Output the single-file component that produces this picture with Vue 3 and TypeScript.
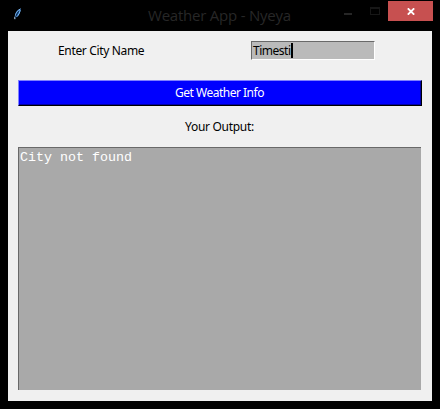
<script setup lang="ts">
import { ref } from 'vue'

const title = 'Weather App - Nyeya'
const city = ref('Timesti')
const output = ref('City not found')
</script>

<template>
  <div class="window">
    <header class="titlebar">
      <svg class="feather" width="8" height="12" viewBox="0 0 8 12">
        <path d="M1 11C.4 6 2.2 2 6.8.5 6.6 4.5 5.2 8 2 9.5Z" fill="#1d5fa8" />
        <path d="M1.2 9C1.2 5.5 3.2 2.5 6.5.8M2.7 8.8C4.6 7.2 5.8 4.5 6.2 2" fill="none" stroke="#8fc4f5" stroke-width=".9" />
        <path d="M.9 11.2C1.4 8.2 3 5.5 4.8 3.2" fill="none" stroke="#06152b" stroke-width=".8" />
        <path d="M.6 9.2L.9 11.2" stroke="#d5e8f8" stroke-width=".9" />
      </svg>
      <h1 class="title">{{ title }}</h1>
      <div class="controls">
        <span class="minimize"></span>
        <span class="maximize"></span>
        <button class="close" aria-label="Close">
          <svg width="8" height="7" viewBox="0 0 8 7">
            <path d="M.8 .3L7.2 6.7M7.2 .3L.8 6.7" stroke="#fff" stroke-width="1.8" />
          </svg>
        </button>
      </div>
    </header>
    <main class="client">
      <div class="row">
        <label class="label">Enter City Name</label>
        <div class="entry"><span class="value">{{ city }}</span><span class="caret"></span></div>
      </div>
      <button class="submit"><span>Get Weather Info</span></button>
      <div class="caption">Your Output:</div>
      <div class="output">{{ output }}</div>
    </main>
  </div>
</template>

<style>
body {
  margin: 0;
  background: #000;
}
</style>

<style scoped>
.window {
  box-sizing: border-box;
  width: 440px;
  height: 409px;
  padding: 0 8px 8px;
  background: #000;
  font-family: "Noto Sans", "Open Sans", sans-serif;
  font-size: 12px;
  color: #000;
  overflow: hidden;
}
.titlebar {
  display: flex;
  height: 31px;
}
.feather {
  margin: 8px 0 0 6px;
}
.title {
  width: 143px;
  margin: 3px 0 0 126px;
  font-family: "Open Sans", sans-serif;
  font-size: 15px;
  line-height: 24px;
  font-weight: 400;
  letter-spacing: -0.22px;
  white-space: nowrap;
  color: #272727;
}
.controls {
  display: flex;
  margin-left: auto;
  margin-right: -1px;
}
.minimize {
  width: 8px;
  height: 2px;
  margin-top: 13px;
  background: #262626;
}
.maximize {
  box-sizing: border-box;
  width: 10px;
  height: 8px;
  margin: 7px 8px 0 18px;
  border: 1px solid #171717;
  border-top-width: 2px;
}
.close {
  display: flex;
  align-items: center;
  justify-content: center;
  width: 45px;
  height: 20px;
  margin-top: 1px;
  padding: 1px 0 0;
  border: 0;
  background: #c75050;
}
.client {
  display: flex;
  flex-direction: column;
  box-sizing: border-box;
  width: 424px;
  height: 370px;
  padding: 10px 10px 11px;
  background: #f0f0f0;
}
.row {
  display: flex;
  height: 19px;
}
.label {
  box-sizing: border-box;
  width: 233px;
  padding-left: 40px;
  line-height: 20px;
  letter-spacing: -0.34px;
}
.entry {
  box-sizing: border-box;
  display: flex;
  width: 124px;
  height: 19px;
  padding-left: 1px;
  border: 1px solid #fff;
  border-top-color: #696969;
  border-left-color: #696969;
  background: #bababa;
  line-height: 18px;
}
.value {
  width: 39px;
  letter-spacing: -0.48px;
}
.caret {
  width: 2px;
  height: 15px;
  margin-top: 1px;
  margin-left: -1px;
  background: #000;
}
.submit {
  box-sizing: border-box;
  width: 404px;
  height: 26px;
  margin-top: 20px;
  padding: 0 1px 0 0;
  border: 1px solid #000;
  border-top-color: #8080ff;
  border-left-color: #8080ff;
  background: #00f;
  box-shadow: inset -1px -1px #0000a8;
  font: inherit;
  line-height: 24px;
  letter-spacing: -0.5px;
  color: #fff;
}
.caption {
  margin-top: 12px;
  padding-right: 1px;
  line-height: 18px;
  letter-spacing: -0.3px;
  text-align: center;
}
.output {
  box-sizing: border-box;
  width: 403px;
  height: 243px;
  margin-top: 11px;
  padding: 1px;
  border-top: 1px solid #696969;
  border-left: 1px solid #696969;
  background: #a9a9a9;
  font-family: "Liberation Mono", "Courier New", monospace;
  font-size: 13.33px;
  line-height: 18px;
  color: #fff;
}
</style>
